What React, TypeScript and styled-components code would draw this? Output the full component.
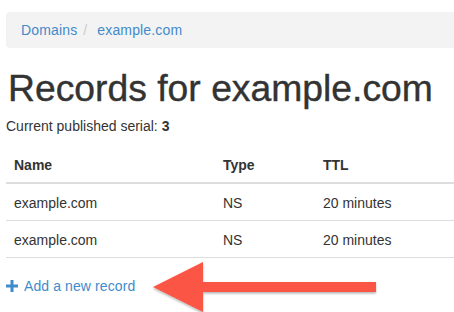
import React from 'react'
import styled, { createGlobalStyle } from 'styled-components'

const GlobalStyle = createGlobalStyle`
  html, body {
    margin: 0;
    padding: 0;
    background: #fff;
    overflow: hidden;
  }
  body {
    font-family: 'Liberation Sans', Arial, sans-serif;
    font-size: 14px;
    line-height: 20px;
    color: #333;
  }
`

const Page = styled.div`
  position: relative;
  width: 454px;
  height: 312px;
  overflow: hidden;
`

const Container = styled.div`
  width: 470px;
  padding: 12px 0 0 6px;
`

const Breadcrumb = styled.ol`
  display: flex;
  list-style: none;
  margin: 0;
  padding: 8px 15px;
  background: #f3f3f3;
  border-radius: 4px;
  letter-spacing: 0.15px;
`

const Crumb = styled.li`
  color: #428bca;
  & + &::before {
    content: '/';
    color: #ccc;
    padding: 0 10px 0 6px;
  }
`

const Title = styled.h1`
  margin: 20px 0 8px 2px;
  font-size: 37.3px;
  font-weight: 500;
  line-height: 40px;
  color: #333;
  -webkit-text-stroke: 0.4px #333;
`

const Serial = styled.p`
  margin: 0 0 10px;
  b {
    font-weight: 700;
  }
`

const Table = styled.table`
  width: 100%;
  table-layout: fixed;
  border-collapse: collapse;
  margin-bottom: 20px;
`

const HeadCell = styled.th<{ $w?: number }>`
  width: ${({ $w }) => ($w ? `${$w}px` : 'auto')};
  text-align: left;
  font-weight: 700;
  padding: 9px 8px 7px;
  border-bottom: 2px solid #ddd;
`

const Cell = styled.td`
  padding: 9px 8px 7px;
  border-bottom: 1px solid #ddd;
`

const AddLink = styled.a`
  display: flex;
  align-items: center;
  gap: 6px;
  margin-top: -2px;
  color: #428bca;
  text-decoration: none;
  font-size: 14px;
  letter-spacing: 0.1px;
`

const Arrow = styled.svg`
  position: absolute;
  left: 150px;
  top: 258px;
  overflow: visible;
`

const records = [
  { name: 'example.com', type: 'NS', ttl: '20 minutes' },
  { name: 'example.com', type: 'NS', ttl: '20 minutes' }
]

const App = () => {
  return (
    <Page>
      <GlobalStyle />
      <Container>
        <Breadcrumb>
          <Crumb>Domains</Crumb>
          <Crumb>example.com</Crumb>
        </Breadcrumb>
        <Title>Records for example.com</Title>
        <Serial>
          Current published serial: <b>3</b>
        </Serial>
        <Table>
          <thead>
            <tr>
              <HeadCell $w={193}>Name</HeadCell>
              <HeadCell $w={84}>Type</HeadCell>
              <HeadCell>TTL</HeadCell>
            </tr>
          </thead>
          <tbody>
            {records.map((r, i) => (
              <tr key={i}>
                <Cell>{r.name}</Cell>
                <Cell>{r.type}</Cell>
                <Cell>{r.ttl}</Cell>
              </tr>
            ))}
          </tbody>
        </Table>
        <AddLink href='#'>
          <svg width='12' height='12' viewBox='0 0 12 12'>
            <path d='M4.5 0h3v4.5H12v3H7.5V12h-3V7.5H0v-3h4.5z' fill='#428bca' />
          </svg>
          Add a new record
        </AddLink>
      </Container>
      <Arrow width='230' height='56' viewBox='0 0 230 56'>
        <defs>
          <filter id='shadow' x='-10%' y='-20%' width='120%' height='150%'>
            <feDropShadow dx='0' dy='1.5' stdDeviation='1' floodColor='#000' floodOpacity='0.3' />
          </filter>
        </defs>
        <path
          d='M3 29L53 4V24H226V34H53V54Z'
          fill='#fb5545'
          filter='url(#shadow)'
        />
      </Arrow>
    </Page>
  )
}

export default App
